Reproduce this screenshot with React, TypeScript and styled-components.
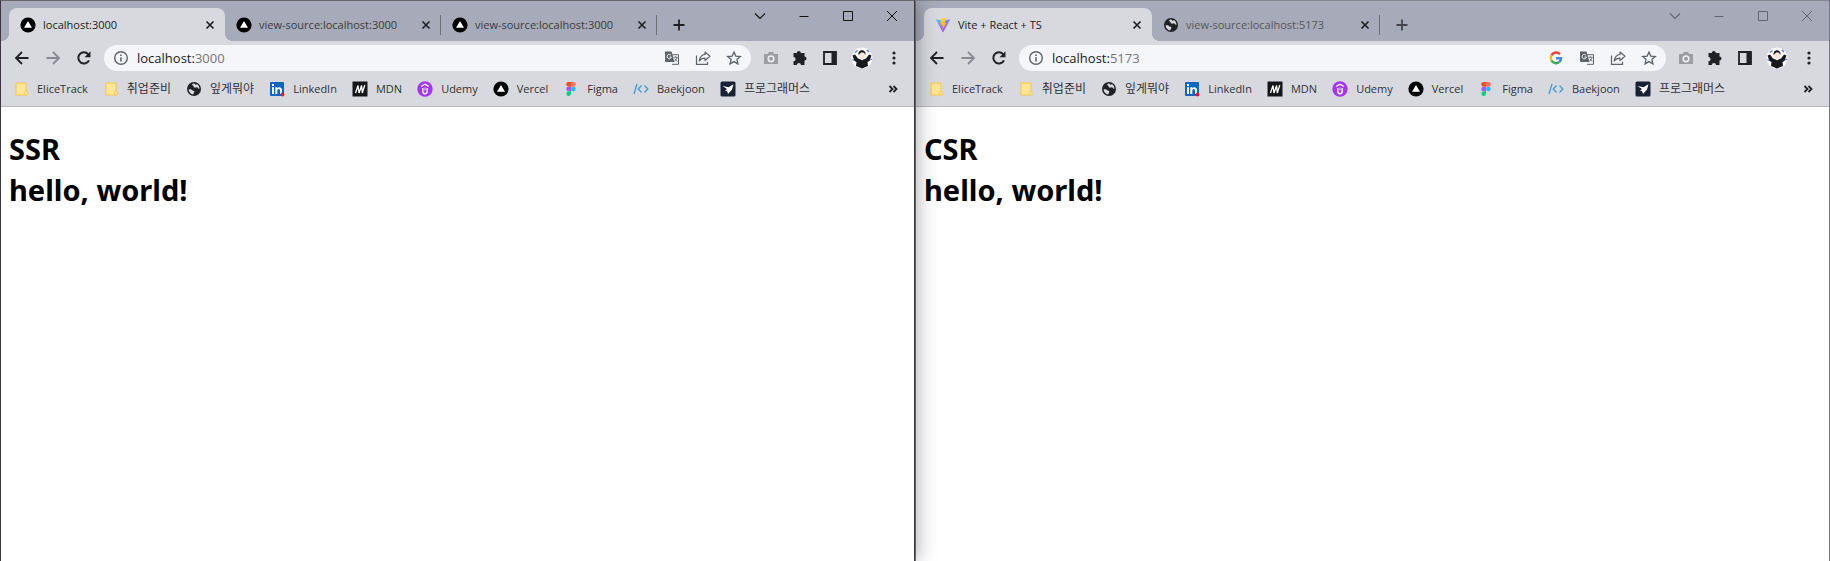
import React from 'react';
import styled, { createGlobalStyle } from 'styled-components';

const INK = '#202124';
const FRAME = '#a7aab8';
const TOOLBAR = '#d8d9df';

const GlobalStyle = createGlobalStyle`
  * { box-sizing: border-box; }
  body { margin: 0; background: #fff; }
  button, input { font: inherit; color: inherit; }
`;

const Desktop = styled.div`
  display: grid;
  grid-template-columns: 1fr 1fr;
  min-height: 100vh;
  font-family: 'Open Sans', 'Noto Sans CJK KR', sans-serif;
  font-size: 11px;
  color: ${INK};
`;

const Window = styled.section<{ $active: boolean }>`
  position: relative;
  z-index: ${p => (p.$active ? 1 : 0)};
  display: flex;
  flex-direction: column;
  min-width: 0;
  background: #fff;
  border: 1px solid ${p => (p.$active ? '#3c3540' : '#77787f')};
  border-top-color: ${p => (p.$active ? '#66656c' : '#85868f')};
  border-bottom: 0;
  box-shadow: ${p => (p.$active ? '0 0 20px rgba(0, 0, 0, 0.4)' : 'none')};
`;

const TabStrip = styled.header`
  display: flex;
  justify-content: space-between;
  height: 40px;
  padding: 7px 0 0 8px;
  background: ${FRAME};
`;

const Tabs = styled.nav`
  display: flex;
`;

const Tab = styled.div<{ $current: boolean; $width: number; $dim: boolean }>`
  position: relative;
  display: flex;
  align-items: center;
  width: ${p => p.$width}px;
  height: 33px;
  padding: 0 7px 0 11px;
  border-radius: 8px 8px 0 0;
  background: ${p => (p.$current ? TOOLBAR : 'transparent')};
  color: ${p => (p.$dim ? '#55565e' : p.$current ? INK : '#3a3b42')};

  &::before, &::after {
    content: '';
    display: ${p => (p.$current ? 'block' : 'none')};
    position: absolute;
    bottom: 0;
    width: 8px;
    height: 8px;
  }
  &::before {
    left: -8px;
    background: radial-gradient(circle at 0 0, transparent 8px, ${TOOLBAR} 8px);
  }
  &::after {
    right: -8px;
    background: radial-gradient(circle at 100% 0, transparent 8px, ${TOOLBAR} 8px);
  }
`;

const TabTitle = styled.span`
  flex: 1;
  margin-left: 7px;
  white-space: nowrap;
`;

const TabDivider = styled.i`
  position: absolute;
  right: 0;
  top: 7px;
  width: 1px;
  height: 20px;
  background: #6c6e78;
`;

const IconButton = styled.button<{ $size?: number; $tone?: string }>`
  display: flex;
  align-items: center;
  justify-content: center;
  flex: none;
  width: ${p => p.$size ?? 16}px;
  height: ${p => p.$size ?? 16}px;
  padding: 0;
  border: 0;
  background: none;
  color: ${p => p.$tone ?? INK};
`;

const NewTab = styled(IconButton)`
  margin: 5px 0 0 10px;
`;

const Captions = styled.div<{ $dim: boolean }>`
  display: flex;
  color: ${p => (p.$dim ? '#63656f' : '#111')};
`;

const CaptionButton = styled.button`
  display: flex;
  justify-content: center;
  width: 44px;
  height: 26px;
  padding: 0;
  border: 0;
  background: none;
`;

const Toolbar = styled.div`
  display: flex;
  align-items: center;
  height: 34px;
  padding: 0 12px 0 13px;
  background: ${TOOLBAR};
`;

const NavButtons = styled.div`
  display: flex;
  gap: 15px;
  margin-right: 12px;
`;

const Omnibox = styled.form`
  display: flex;
  flex: 1;
  align-items: center;
  gap: 15px;
  min-width: 0;
  height: 26px;
  padding: 0 9px;
  border-radius: 13px;
  background: #f5f6f9;
`;

const AddressField = styled.div`
  display: flex;
  flex: 1;
  align-items: center;
  gap: 8px;
  min-width: 0;
  font-size: 13px;
`;

const AddressBox = styled.label`
  position: relative;
  display: flex;
  flex: 1;
  align-items: center;
  height: 26px;
`;

const AddressInput = styled.input`
  width: 100%;
  padding: 0;
  border: 0;
  outline: 0;
  background: none;
`;

const AddressText = styled.span`
  position: absolute;
  left: 0;
  pointer-events: none;
  color: #73757b;
`;

const Host = styled.span`
  color: ${INK};
`;

const Extensions = styled.div`
  display: flex;
  align-items: center;
  justify-content: space-between;
  width: 139px;
  margin-left: 12px;
`;

const Bookmarks = styled.nav`
  display: flex;
  align-items: center;
  height: 32px;
  padding: 0 13px 4px 12px;
  background: ${TOOLBAR};
  border-bottom: 1px solid #b9bac1;
`;

const BookmarkList = styled.div`
  display: flex;
  flex: 1;
  gap: 15px;
`;

const Bookmark = styled.a<{ $korean: boolean }>`
  display: flex;
  align-items: center;
  gap: 8px;
  height: 18px;
  color: #303136;
  font-size: ${p => (p.$korean ? 12 : 11)}px;
  line-height: 16px;
  white-space: nowrap;
  text-decoration: none;
`;

const Page = styled.main`
  flex: 1;
  padding: 21px 8px;
`;

const Heading = styled.h1`
  margin: 0;
  color: #000;
  font-family: 'Noto Sans', sans-serif;
  font-size: 29px;
  font-weight: 700;
  line-height: 41px;
`;

const Svg = styled.svg`
  display: block;
  flex: none;
`;

type IconName =
  | 'vercel' | 'vite' | 'globe' | 'folder' | 'linkedin' | 'mdn' | 'udemy' | 'figma' | 'baekjoon' | 'programmers'
  | 'close' | 'plus' | 'back' | 'forward' | 'reload' | 'info' | 'google' | 'translate' | 'share' | 'star'
  | 'camera' | 'puzzle' | 'panel' | 'dots' | 'more' | 'chevron' | 'minimize' | 'maximize' | 'exit';

const art: Record<IconName, React.ReactNode> = {
  vercel: <><circle cx="8" cy="8" r="7.6" fill="#000" /><path d="M8 4l4 6.8H4z" fill="#fff" /></>,
  vite: (
    <>
      <defs>
        <linearGradient id="viteBody" x1="0" y1="0" x2="0.6" y2="1">
          <stop offset="0" stopColor="#41d1ff" /><stop offset="1" stopColor="#bd34fe" />
        </linearGradient>
        <linearGradient id="viteBolt" x1="0" y1="0" x2="0" y2="1">
          <stop offset="0" stopColor="#ffd83a" /><stop offset="1" stopColor="#ffa800" />
        </linearGradient>
      </defs>
      <path d="M.6 2.2L8 15.5l7.4-13.3L8 3.6z" fill="url(#viteBody)" />
      <path d="M11.2.6L5.8 1.7l-.4 6 1.7-.3-.5 2.3 1.5-.4L7.4 13l4-7-1.8.3z" fill="url(#viteBolt)" />
    </>
  ),
  globe: (
    <>
      <circle cx="8" cy="8" r="7" fill="#202124" />
      <path d="M2.6 8.2c1.8-.2 3.1.2 3.8 1.1.5.8 1.9.3 2 1.4.1 1-1.1 1-1 2.8C4.6 13.3 2.7 11 2.6 8.2z" fill="#d8d9df" />
      <path d="M7.2 2.500c-1.300.6-1.300 1.700-.3 2.100 1 .5.5 1.700 1.600 2 1.300.2 1.600-.8 2.700-.3.8.4.5 1.400 2.200 1.600.1-2.300-1-3.900-2.600-4.800-.3.9-1.400 1-1.700.3-.2-.5-.9-.9-1.900-.9z" fill="#d8d9df" />
    </>
  ),
  folder: (
    <>
      <rect x="3" y="2" width="10" height="12" fill="#ffe594" stroke="#f2c84b" />
      <path d="M11.5 14v-2.500q0-1.500 1.500-1.500t1 1.500V14z" fill="#ffe594" stroke="#f2c84b" strokeWidth=".8" />
    </>
  ),
  linkedin: (
    <>
      <rect x="1" y="1" width="14" height="14" rx="1" fill="#0a66c2" />
      <path d="M3 6.300h2V13H3zM3 3h2v2H3zM6.300 6.300h1.900v.9c1-1.600 4.800-1.500 4.800 1.800v4h-2V9.700c0-2.300-2.700-2.100-2.700 0V13h-2z" fill="#fff" />
      <circle cx="13.500" cy="13.500" r="1.900" fill="#e0182d" />
    </>
  ),
  mdn: <><rect x=".5" y=".5" width="15" height="15" fill="#15161a" /><path d="M3.500 12L6 4.500 7 12l2.600-7.500L10.300 12l2.500-8" fill="none" stroke="#fff" strokeWidth="1.300" /></>,
  udemy: (
    <>
      <circle cx="8" cy="8" r="7.700" fill="#a435f0" />
      <path d="M4.300 5.300L8 3.200l3.700 2.100M5.800 7v3.600c0 2.800 4.400 2.800 4.400 0V7" fill="none" stroke="#fff" strokeWidth="1.400" />
      <path d="M8 6.500v3" stroke="#fff" strokeWidth=".8" />
    </>
  ),
  figma: (
    <>
      <path d="M8 1H5.500a2.300 2.300 0 000 4.700H8z" fill="#f24e1e" />
      <path d="M8 1h2.500a2.300 2.300 0 010 4.700H8z" fill="#ff7262" />
      <path d="M8 5.700H5.500a2.300 2.300 0 000 4.600H8z" fill="#a259ff" />
      <circle cx="10.400" cy="8" r="2.300" fill="#1abcfe" />
      <path d="M8 10.300H5.500A2.300 2.300 0 108 12.700z" fill="#0acf83" />
    </>
  ),
  baekjoon: <path d="M4 3L1 13M8.500 4.500L5.200 8l3.300 3.500M11.500 4.500L14.800 8l-3.300 3.500" fill="none" stroke="#3f9bd6" strokeWidth="1.300" />,
  programmers: (
    <>
      <rect x=".5" y=".5" width="15" height="15" rx="1.500" fill="#172334" />
      <path d="M2.500 5l6 1.200L13.500 3.300 12 8.500l-4 4.500-.8-2.800-2.200-.4L7 8z" fill="#fff" />
    </>
  ),
  close: <path d="M4.500 4.500l7 7M11.500 4.500l-7 7" stroke="currentColor" strokeWidth="1.700" />,
  plus: <path d="M8 2.500v11M2.500 8h11" stroke="currentColor" strokeWidth="1.800" />,
  back: <path d="M14.500 8H2.500M8 2L2 8l6 6" fill="none" stroke="currentColor" strokeWidth="1.800" />,
  forward: <path d="M1.500 8h12M8 2l6 6-6 6" fill="none" stroke="currentColor" strokeWidth="1.800" />,
  reload: <><path d="M13 10.300A5.600 5.600 0 1112.200 4.300" fill="none" stroke="currentColor" strokeWidth="2" /><path d="M14.500 1.200v6h-6z" fill="currentColor" /></>,
  info: <><circle cx="8" cy="8" r="6.300" fill="none" stroke="currentColor" strokeWidth="1.400" /><path d="M8 7.200v4.300M8 4.400V6" stroke="currentColor" strokeWidth="1.600" /></>,
  google: (
    <g fill="none" strokeWidth="2.400">
      <path d="M12 4.200A5.200 5.200 0 003.400 5.500" stroke="#ea4335" />
      <path d="M3.400 5.500a5.200 5.200 0 000 5" stroke="#fbbc05" />
      <path d="M3.400 10.500a5.200 5.200 0 008 1.400" stroke="#34a853" />
      <path d="M11.400 11.900A5 5 0 0013 8.200H8" stroke="#4285f4" />
    </g>
  ),
  translate: (
    <>
      <path d="M6.500 4.700h8v9.600H8" fill="none" stroke="currentColor" strokeWidth="1" />
      <path d="M1 1.500h6.500L10.500 12H2a1 1 0 01-1-1z" fill="currentColor" />
      <path d="M7 5.300A2.200 2.200 0 107.400 7H5.500" fill="none" stroke="#f5f6f9" strokeWidth="1" />
      <path d="M9.500 7.300h4.200M11.500 6.300v1M13 7.500c-.4 1.800-1.300 2.900-2.500 3.700M10.800 8.800l2.500 2.700" fill="none" stroke="currentColor" strokeWidth=".9" />
    </>
  ),
  share: (
    <>
      <path d="M1.500 5.500v8.800h11v-2.500" fill="none" stroke="currentColor" strokeWidth="1.200" />
      <path d="M10 2l5 4.300-5 4.200V8.200C7.500 8.200 5.600 9 4.200 11 4.700 7.500 6.500 4.900 10 4.400z" fill="none" stroke="currentColor" strokeWidth="1.200" strokeLinejoin="round" />
    </>
  ),
  star: <path d="M8 2l1.800 4.100 4.500.4-3.400 3 1 4.400L8 11.600l-3.900 2.300 1-4.400-3.400-3 4.500-.4z" fill="none" stroke="currentColor" strokeWidth="1.300" />,
  camera: (
    <>
      <path d="M1 4h3.800l1.200-2h4l1.200 2H15v10H1z" fill="#9b9ca1" />
      <circle cx="8" cy="8.800" r="3.600" fill="#eeeff2" /><circle cx="8" cy="8.800" r="2" fill="#9b9ca1" />
    </>
  ),
  puzzle: <path d="M4.800 3a2 2 0 014 0h3.700v3.600a2 2 0 010 4V15H9a2 2 0 00-4.200 0H1.500v-3.700a2 2 0 000-4.200V3z" fill="currentColor" />,
  panel: <><path d="M2 2h12v12H2z" fill="none" stroke="currentColor" strokeWidth="1.800" /><path d="M9.500 2H14v12H9.500z" fill="currentColor" /></>,
  dots: <g fill="currentColor"><circle cx="8" cy="3" r="1.600" /><circle cx="8" cy="8" r="1.600" /><circle cx="8" cy="13" r="1.600" /></g>,
  more: <path d="M4.500 5l3 3-3 3M8.500 5l3 3-3 3" fill="none" stroke="currentColor" strokeWidth="1.800" />,
  chevron: <path d="M3 5.500l5 5 5-5" fill="none" stroke="currentColor" strokeWidth="1.100" />,
  minimize: <path d="M3.500 8.500h9" stroke="currentColor" />,
  maximize: <path d="M3.500 3.500h9v9h-9z" fill="none" stroke="currentColor" />,
  exit: <path d="M3 3l10 10M13 3L3 13" stroke="currentColor" />,
};

function Icon({ name }: { name: IconName }) {
  return (
    <Svg width="16" height="16" viewBox="0 0 16 16" aria-hidden="true">
      {art[name]}
    </Svg>
  );
}

function Avatar() {
  return (
    <Svg width="22" height="22" viewBox="0 0 22 22" aria-hidden="true">
      <circle cx="11" cy="11" r="10.500" fill="#fff" />
      <path d="M4 5.500l2.500-2M16 3l2 2M1.500 12.500l1.500 1M19.500 13l1.500-1" stroke="#5b78e6" strokeWidth="1.500" />
      <path d="M1.500 8.500L4 7.500l3 4 4 1.500 4-1.500 3-4 2.500 1-2 5.500-2 1 .5 4-6 2.500-6-2.500.5-4-2-1z" fill="#17181c" />
      <circle cx="11" cy="8" r="3.200" fill="#f7e3d9" />
      <path d="M7.500 8c-1-6.300 8-6.300 7 0l-1.500-2.300-2.500-.5L9 6.500z" fill="#17181c" />
      <path d="M9 11h4l-2 2.500z" fill="#f7e3d9" />
    </Svg>
  );
}

const bookmarks: { icon: IconName; label: string; korean?: boolean }[] = [
  { icon: 'folder', label: 'EliceTrack' },
  { icon: 'folder', label: '취업준비', korean: true },
  { icon: 'globe', label: '잎게뭐야', korean: true },
  { icon: 'linkedin', label: 'LinkedIn' },
  { icon: 'mdn', label: 'MDN' },
  { icon: 'udemy', label: 'Udemy' },
  { icon: 'vercel', label: 'Vercel' },
  { icon: 'figma', label: 'Figma' },
  { icon: 'baekjoon', label: 'Baekjoon' },
  { icon: 'programmers', label: '프로그래머스', korean: true },
];

interface BrowserProps {
  active?: boolean;
  tabWidth: number;
  tabs: { icon: IconName; title: string }[];
  host: string;
  port: string;
  actions: IconName[];
  title: string;
}

function Browser({ active = false, tabWidth, tabs, host, port, actions, title }: BrowserProps) {
  const [edited, setEdited] = React.useState('');
  return (
    <Window $active={active} aria-label={title}>
      <TabStrip>
        <Tabs>
          {tabs.map((tab, i) => (
            <Tab key={i} $current={i === 0} $width={tabWidth} $dim={!active && i > 0}>
              <Icon name={tab.icon} />
              <TabTitle>{tab.title}</TabTitle>
              <IconButton aria-label="Close tab"><Icon name="close" /></IconButton>
              {i > 0 && <TabDivider />}
            </Tab>
          ))}
          <NewTab $size={24} $tone={active ? INK : '#44454c'} aria-label="New tab"><Icon name="plus" /></NewTab>
        </Tabs>
        <Captions $dim={!active}>
          {(['chevron', 'minimize', 'maximize', 'exit'] as IconName[]).map(name => (
            <CaptionButton key={name} aria-label={name}><Icon name={name} /></CaptionButton>
          ))}
        </Captions>
      </TabStrip>
      <Toolbar>
        <NavButtons>
          <IconButton aria-label="Back"><Icon name="back" /></IconButton>
          <IconButton $tone="#8a8b91" aria-label="Forward"><Icon name="forward" /></IconButton>
          <IconButton aria-label="Reload"><Icon name="reload" /></IconButton>
        </NavButtons>
        <Omnibox>
          <AddressField>
            <IconButton type="button" $tone="#5f6368" aria-label="Site information"><Icon name="info" /></IconButton>
            <AddressBox>
              {edited === '' && <AddressText><Host>{host}</Host>{port}</AddressText>}
              <AddressInput aria-label="Address" value={edited} onChange={e => setEdited(e.target.value)} />
            </AddressBox>
          </AddressField>
          {actions.map(name => (
            <IconButton key={name} type="button" $tone="#5f6368" aria-label={name}><Icon name={name} /></IconButton>
          ))}
        </Omnibox>
        <Extensions>
          <IconButton aria-label="Capture"><Icon name="camera" /></IconButton>
          <IconButton aria-label="Extensions"><Icon name="puzzle" /></IconButton>
          <IconButton aria-label="Side panel"><Icon name="panel" /></IconButton>
          <IconButton $size={22} aria-label="Profile"><Avatar /></IconButton>
          <IconButton aria-label="Menu"><Icon name="dots" /></IconButton>
        </Extensions>
      </Toolbar>
      <Bookmarks aria-label="Bookmarks">
        <BookmarkList>
          {bookmarks.map(b => (
            <Bookmark key={b.label} href="#" $korean={!!b.korean}>
              <Icon name={b.icon} />
              {b.label}
            </Bookmark>
          ))}
        </BookmarkList>
        <IconButton aria-label="More bookmarks"><Icon name="more" /></IconButton>
      </Bookmarks>
      <Page>
        <Heading>{title}<br />hello, world!</Heading>
      </Page>
    </Window>
  );
}

export default function App() {
  return (
    <>
      <GlobalStyle />
      <Desktop>
        <Browser
          active
          tabWidth={216}
          tabs={[
            { icon: 'vercel', title: 'localhost:3000' },
            { icon: 'vercel', title: 'view-source:localhost:3000' },
            { icon: 'vercel', title: 'view-source:localhost:3000' },
          ]}
          host="localhost:"
          port="3000"
          actions={['translate', 'share', 'star']}
          title="SSR"
        />
        <Browser
          tabWidth={228}
          tabs={[
            { icon: 'vite', title: 'Vite + React + TS' },
            { icon: 'globe', title: 'view-source:localhost:5173' },
          ]}
          host="localhost:"
          port="5173"
          actions={['google', 'translate', 'share', 'star']}
          title="CSR"
        />
      </Desktop>
    </>
  );
}
